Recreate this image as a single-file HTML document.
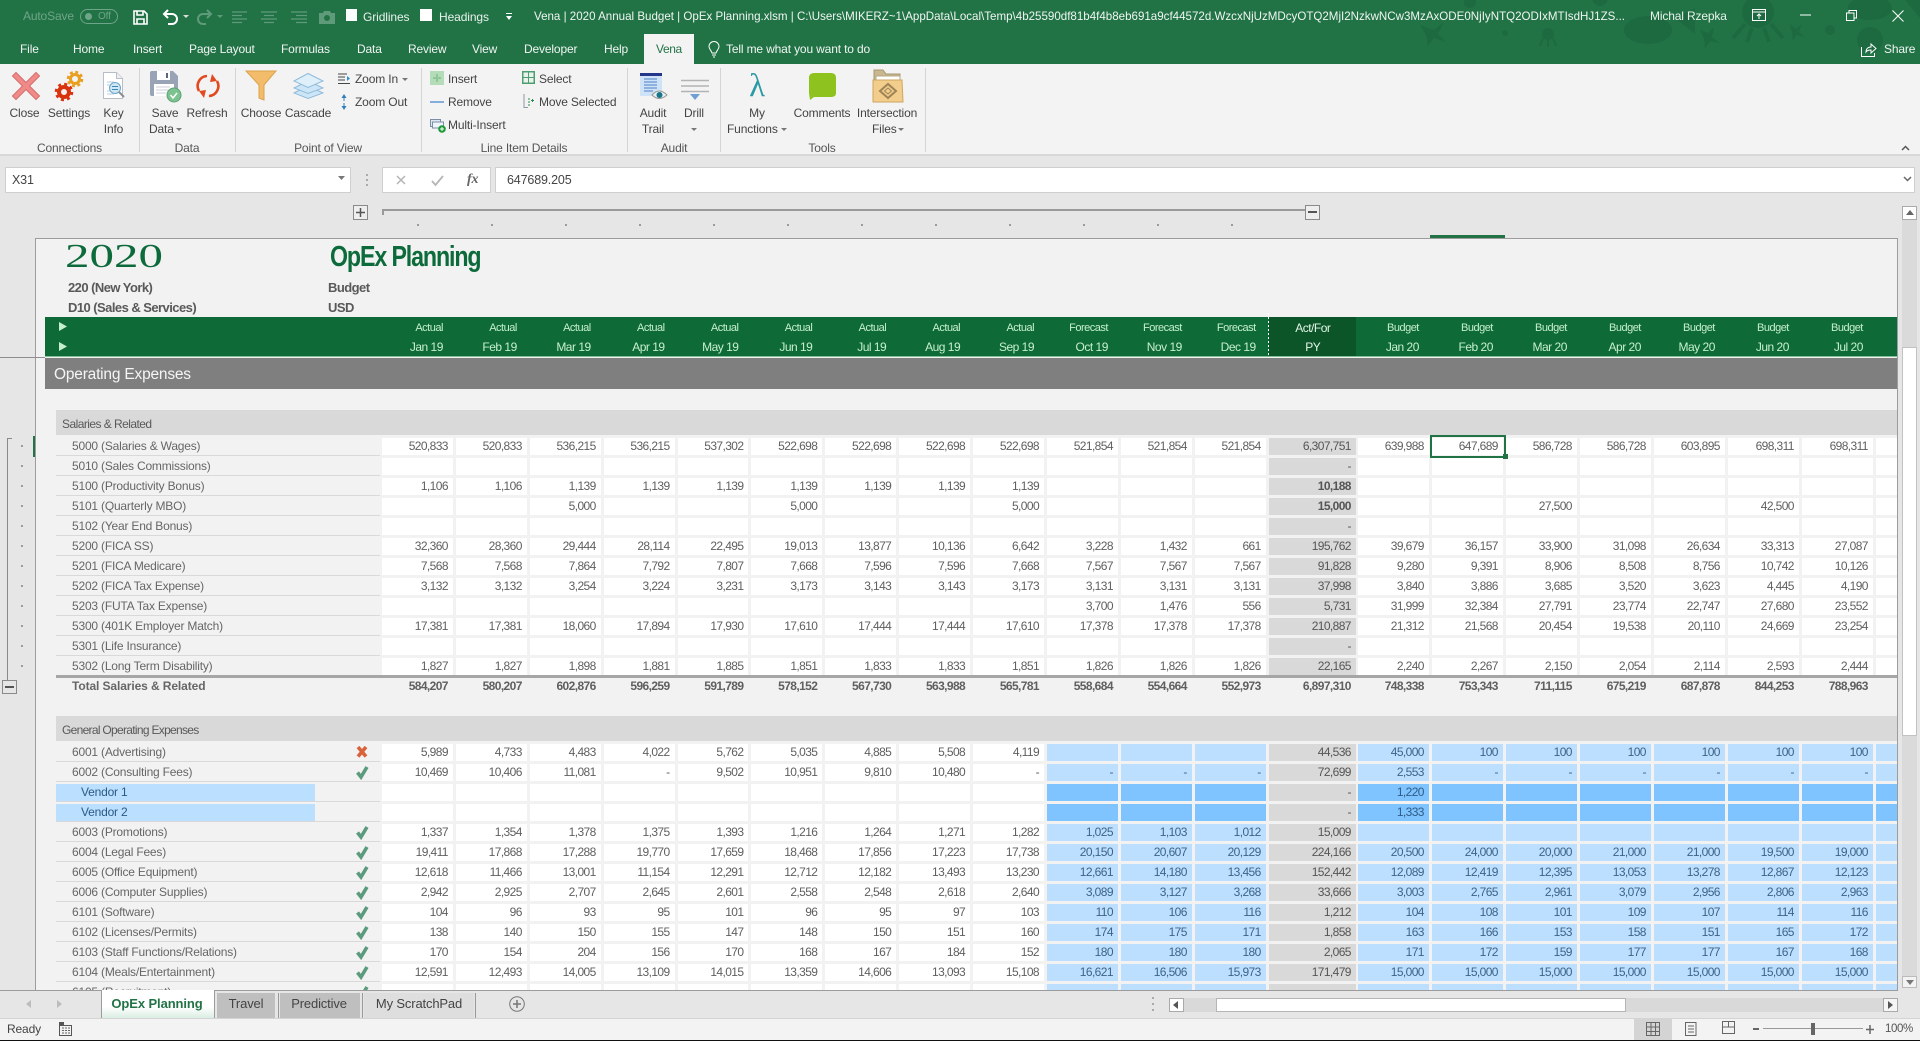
<!DOCTYPE html>
<html><head><meta charset="utf-8"><title>Vena OpEx Planning</title>
<style>
*{box-sizing:border-box}
html,body{margin:0;padding:0;width:1920px;height:1041px;overflow:hidden;background:#e6e6e6;font-family:"Liberation Sans",sans-serif;font-size:12px;color:#444}
.a{position:absolute}
.t{position:absolute;white-space:nowrap;line-height:16px;letter-spacing:-.15px}
.c{transform:translateX(-50%)}
.w{color:#e8f1ec}
.tab{color:#f0f5f2;top:41px}
.rb{color:#444;font-size:12px}
.gl{color:#555;top:140px;font-size:12px}
.sep{position:absolute;width:1px;top:68px;height:84px;background:#d4d4d4}
svg{position:absolute;overflow:visible}
#sheet{position:absolute;left:0;top:0;width:1897px;height:990px;overflow:hidden}
.r{position:absolute;left:0;width:2000px;height:20px;display:grid;grid-template-columns:382px repeat(12,73.9px) 89.2px repeat(8,74px);font-size:12px;letter-spacing:-.6px;color:#5f5f5f}
.r i{font-style:normal;display:block;background:#fff;margin:2px 3px 1px 0;padding-right:5px;text-align:right;line-height:17px;height:17px;white-space:nowrap}
.r i:nth-child(14){background:#d9d9d9;margin-right:2px;color:#555}
.r i.l{position:relative;background:none;margin:0 2px 0 56px;padding:0 0 0 16px;height:20px;line-height:20px;text-align:left;border-bottom:1px solid #d9d9d9;letter-spacing:-.2px;color:#666}
.l svg{left:299.500px;top:3px}
.l b{position:absolute;left:0;top:2px;width:259px;height:17px;line-height:17px;background:#bbdfff;color:#2a5a85;padding-left:25px;font-weight:normal}
.l b+u{position:absolute;left:0;top:19px;width:262px;height:1px;background:#f2f2f2}
.bl i:nth-child(n+15),.bl i:nth-child(n+11):nth-child(-n+13){background:#bddfff;color:#3b6488}
.vd i:nth-child(n+15),.vd i:nth-child(n+11):nth-child(-n+13){background:#7fc4ff;color:#2e5c86}
.tot i,.tot i:nth-child(14){background:none;font-weight:bold;color:#5f5f5f}
.tot i.l{border-bottom:none;font-weight:bold;letter-spacing:-.1px}
.h{position:absolute;left:0;width:2000px;height:20px;display:grid;grid-template-columns:382px repeat(12,73.9px) 89.2px repeat(8,74px);letter-spacing:-.5px;color:#c6efce;line-height:20px}
.h i{font-style:normal;text-align:right;padding-right:13px;white-space:nowrap}
.h i:nth-child(14){text-align:center;padding-right:1px;color:#e2f5e6}
.d{position:absolute;width:2px;height:2px;background:#9a9a9a}
</style></head><body>

<!-- TITLE BAR -->
<div class="a" style="left:0;top:0;width:1920px;height:64px;background:#217346"></div>
<svg style="left:1400px;top:0" width="520" height="64" fill="#1e6a40">
<ellipse cx="248" cy="30" rx="24" ry="14"/><path d="M275 18l20-10v26z"/><path d="M20 25l14 5 10-8-6 12 8 8-12-4-6 8-2-11z"/>
<circle cx="148" cy="34" r="6"/><path d="M143 38l-3 8M148 40v7M153 38l3 8" stroke="#1e6a40" stroke-width="2"/>
<circle cx="358" cy="12" r="16"/><path d="M345 24l-12 14M352 28l-5 14M364 28l5 14M371 24l12 14" stroke="#1e6a40" stroke-width="4"/>
<path d="M300 30l8 3 6-6-2 10 8 6-10-2-5 8-1-10z"/><circle cx="430" cy="30" r="5"/><ellipse cx="470" cy="8" rx="22" ry="12"/><circle cx="470" cy="40" r="13"/><path d="M390 24l6 5 6-5-3 8 6 5-9-2-3 7-1-9z"/>
<path d="M505 0l15 18v-18z"/><circle cx="105" cy="33" r="3"/><circle cx="70" cy="2" r="6"/><circle cx="200" cy="-2" r="8"/>
</svg>
<span class="t" style="left:23px;top:8px;color:#6fa588">AutoSave</span>
<div class="a" style="left:80px;top:9px;width:38px;height:15px;border:1px solid #6fa588;border-radius:8px"></div>
<div class="a" style="left:85px;top:13px;width:7px;height:7px;border-radius:50%;background:#6fa588"></div>
<span class="t" style="left:98px;top:9px;font-size:10px;color:#6fa588">Off</span>
<svg style="left:133px;top:10px" width="15" height="15" fill="none" stroke="#fff" stroke-width="1.6"><path d="M1 1h10l3 3v10H1z"/><path d="M4 1v4h6V1M4 14V9h7v5"/></svg>
<svg style="left:162px;top:9px" width="17" height="16" fill="none" stroke="#fff" stroke-width="2"><path d="M6 1L2 5l4 4M2 5h8a5 5 0 0 1 0 10H6"/></svg>
<svg style="left:183px;top:15px" width="7" height="4" fill="#ddd"><path d="M0 0h6L3 3z"/></svg>
<svg style="left:197px;top:9px" width="16" height="16" fill="none" stroke="#5f9b7b" stroke-width="2"><path d="M10 1l4 4-4 4M14 5H6a5 5 0 0 0 0 10h3"/></svg>
<svg style="left:217px;top:15px" width="7" height="4" fill="#5f9b7b"><path d="M0 0h6L3 3z"/></svg>
<svg style="left:232px;top:11px" width="76" height="12" stroke="#5f9b7b" stroke-width="1.2"><path d="M0 1h15M0 4.500h10M0 8h15M0 11.500h10M29 1h16M32 4.500h10M29 8h16M32 11.500h10M59 1h16M64 4.500h11M59 8h16M64 11.500h11"/></svg>
<svg style="left:319px;top:10px" width="16" height="14" fill="#5f9b7b"><path d="M0 3h4l1-2h6l1 2h4v11H0z"/><circle cx="8" cy="8" r="3" fill="#217346"/></svg>
<div class="a" style="left:346px;top:9px;width:11px;height:12px;background:#fff"></div>
<span class="t w" style="left:363px;top:9px;letter-spacing:-.1px">Gridlines</span>
<div class="a" style="left:420px;top:9px;width:12px;height:12px;background:#fff"></div>
<span class="t w" style="left:439px;top:9px;letter-spacing:-.1px">Headings</span>
<svg style="left:506px;top:13px" width="7" height="8" fill="#fff"><path d="M0 0h6v1H0zM0 3h6L3 7z"/></svg>
<svg style="left:534px;top:4px" width="1092" height="24"><text x="0" y="16" font-family="Liberation Sans" font-size="12" fill="#f0f5f2" textLength="1091" lengthAdjust="spacingAndGlyphs">Vena | 2020 Annual Budget | OpEx Planning.xlsm | C:\Users\MIKERZ~1\AppData\Local\Temp\4b25590df81b4f4b8eb691a9cf44572d.WzcxNjUzMDcyOTQ2MjI2NzkwNCw3MzAxODE0NjIyNTQ2ODIxMTIsdHJ1ZS...</text></svg>
<span class="t w" style="left:1650px;top:8px">Michal Rzepka</span>
<svg style="left:1752px;top:9px" width="14" height="12" fill="none" stroke="#fff"><path d="M.5.5h13v11H.5zM.5 3h13M7 10V5M5 7l2-2 2 2"/></svg>
<svg style="left:1800px;top:14px" width="11" height="2" stroke="#fff"><path d="M0 1h11"/></svg>
<svg style="left:1846px;top:10px" width="11" height="11" fill="none" stroke="#fff"><path d="M.5 3h7.500v7.500H.5zM3 3V.5h7.500V8H8"/></svg>
<svg style="left:1892px;top:10px" width="12" height="12" stroke="#fff"><path d="M.5.5l11 11M11.500.5l-11 11"/></svg>

<!-- TABS -->
<span class="t tab" style="left:20px">File</span>
<span class="t tab" style="left:73px">Home</span>
<span class="t tab" style="left:133px">Insert</span>
<span class="t tab" style="left:189px">Page Layout</span>
<span class="t tab" style="left:281px">Formulas</span>
<span class="t tab" style="left:357px">Data</span>
<span class="t tab" style="left:408px">Review</span>
<span class="t tab" style="left:472px">View</span>
<span class="t tab" style="left:524px">Developer</span>
<span class="t tab" style="left:604px">Help</span>
<div class="a" style="left:644px;top:34px;width:50px;height:30px;background:#f3f3f3"></div>
<span class="t" style="left:656px;top:41px;color:#217346;letter-spacing:-.4px">Vena</span>
<svg style="left:708px;top:41px" width="12" height="17" fill="none" stroke="#fff"><path d="M4 12C3 9 1 8 1 5.500a5 5 0 0 1 10 0C11 8 9 9 8 12zM4 14h4M5 16h2"/></svg>
<span class="t tab" style="left:726px">Tell me what you want to do</span>
<svg style="left:1861px;top:42px" width="16" height="15" fill="none" stroke="#fff"><path d="M.5 5v9.500h13V11M5 10c0-4 3-5 5-5V2l5 4.500-5 4.500V8c-2 0-4 .5-5 2z"/></svg>
<span class="t tab" style="left:1884px">Share</span>

<!-- RIBBON -->
<div class="a" style="left:0;top:64px;width:1920px;height:92px;background:#f3f3f3;border-bottom:2px solid #d8d8d8"></div>
<div class="sep" style="left:139px"></div><div class="sep" style="left:235px"></div><div class="sep" style="left:421px"></div><div class="sep" style="left:627px"></div><div class="sep" style="left:720px"></div><div class="sep" style="left:925px"></div>

<svg style="left:12px;top:72px" width="28" height="28" fill="none" stroke-linecap="square"><path d="M4 4l20 20M24 4L4 24" stroke="#d36c6a" stroke-width="6"/><path d="M4 4l20 20M24 4L4 24" stroke="#f08a88" stroke-width="4"/></svg>
<span class="t c rb" style="left:24.500px;top:105px">Close</span>
<svg style="left:55px;top:71px" width="30" height="30" fill="none"><circle cx="9" cy="21" r="5" stroke="#d8330c" stroke-width="4"/><circle cx="9" cy="21" r="8" stroke="#d8330c" stroke-width="2.500" stroke-dasharray="3 3.280"/><circle cx="20" cy="8" r="4.500" stroke="#e9a021" stroke-width="3"/><circle cx="20" cy="8" r="7" stroke="#e9a021" stroke-width="2.500" stroke-dasharray="3 2.500"/></svg>
<span class="t c rb" style="left:69px;top:105px">Settings</span>
<svg style="left:103px;top:72px" width="24" height="28"><path d="M.5.5h13l6 6v20H.5z" fill="#fff" stroke="#b8bec6"/><path d="M13.500.5v6h6" fill="#eee" stroke="#b8bec6"/><circle cx="12" cy="16" r="5.500" fill="#cfe6f5" stroke="#6aa5c9"/><path d="M9 14.500h6M9 17.500h6" stroke="#3b87b5"/><path d="M16 20l5 5" stroke="#8a8f95" stroke-width="2"/><path d="M4 10h7M4 13h3M4 19h3M4 22h7" stroke="#b5cbdc"/></svg>
<span class="t c rb" style="left:113.500px;top:105px">Key</span><span class="t c rb" style="left:113.500px;top:121px">Info</span>
<span class="t c gl" style="left:69.500px">Connections</span>

<svg style="left:150px;top:71px" width="31" height="31"><path d="M0 2q0-2 2-2h21l5 5v20H2q-2 0-2-2z" fill="#98a4b5"/><path d="M7 0h13v9H7z" fill="#fff"/><path d="M16 2h2v5h-2z" fill="#5b6777"/><path d="M4 13h20v12H4z" fill="#fff"/><path d="M6 16h14M6 19h14M6 22h10" stroke="#ccd"/><circle cx="24" cy="24" r="7" fill="#7cc391" stroke="#5da274"/><path d="M20.500 24l2.500 3 4-5" stroke="#fff" stroke-width="1.500" fill="none"/></svg>
<span class="t c rb" style="left:165px;top:105px">Save</span><span class="t rb" style="left:149px;top:121px">Data</span>
<svg style="left:176px;top:128px" width="7" height="4" fill="#777"><path d="M0 0h6L3 3z"/></svg>
<svg style="left:195px;top:73px" width="26" height="26" fill="none" stroke="#e2491f" stroke-width="2.600"><path d="M4 18A10 10 0 0 1 12 3"/><path d="M22 8A10 10 0 0 1 14 23"/><path d="M17 1l5 7-7 1z" fill="#e2491f" stroke="none"/><path d="M9 25l-5-7 7-1z" fill="#e2491f" stroke="none"/></svg>
<span class="t c rb" style="left:207px;top:105px">Refresh</span>
<span class="t c gl" style="left:187px">Data</span>

<svg style="left:246px;top:71px" width="31" height="30"><path d="M0 0h30L18 14v15l-5 -2V14z" fill="#f2bc6a" stroke="#dca24b"/></svg>
<span class="t c rb" style="left:261px;top:105px">Choose</span>
<svg style="left:293px;top:73px" width="31" height="26" fill="#cde6f7" stroke="#8fbbdb"><path d="M15 13L1 20l14 5.500L30 20z"/><path d="M15 8L1 15l14 5.500L30 15z"/><path d="M15 .5L1 8l14 6.500L30 8z" fill="#dff0fa"/></svg>
<span class="t c rb" style="left:308px;top:105px">Cascade</span>
<svg style="left:338px;top:73px" width="13" height="12" stroke="#444"><path d="M0 1h9M0 4h7M0 7h7M0 10.500h12"/><path d="M9 3l3 2.500-3 2.500z" fill="#2e90d0" stroke="none"/></svg>
<span class="t rb" style="left:355px;top:71px">Zoom In</span>
<svg style="left:402px;top:78px" width="7" height="4" fill="#777"><path d="M0 0h6L3 3z"/></svg>
<svg style="left:340px;top:94px" width="8" height="16" fill="#2e7fc0"><path d="M4 0l2.500 4h-5zM4 16l-2.500-4h5zM3.500 4h1v3h-1zM3.500 9h1v3h-1z"/></svg>
<span class="t rb" style="left:355px;top:94px">Zoom Out</span>
<span class="t c gl" style="left:328px">Point of View</span>

<div class="a" style="left:430px;top:71px;width:14px;height:14px;background:#b5dcb9"></div>
<svg style="left:433px;top:74px" width="8" height="8" stroke="#8fc798" stroke-width="2"><path d="M4 0v8M0 4h8"/></svg>
<span class="t rb" style="left:448px;top:71px">Insert</span>
<div class="a" style="left:430px;top:101px;width:14px;height:2px;background:#86aeda"></div>
<span class="t rb" style="left:448px;top:94px">Remove</span>
<svg style="left:430px;top:118px" width="16" height="15"><path d="M.5 1.500h10v7h-10z" fill="#dce8f3" stroke="#7c8ea3"/><path d="M2.500 4h11v6h-11z" fill="#eef4f9" stroke="#7c8ea3"/><circle cx="12" cy="11" r="3.800" fill="#1f9a3a"/><path d="M12 9v4M10 11h4" stroke="#fff"/></svg>
<span class="t rb" style="left:448px;top:117px">Multi-Insert</span>
<svg style="left:522px;top:71px" width="13" height="13"><path d="M0 0h13v13H0z" fill="#4d9e70"/><path d="M1.500 1.500h4.500v4.500h-4.500zM7 1.500h4.500v4.500H7zM1.500 7h4.500v4.500h-4.500zM7 7h4.500v4.500H7z" fill="#e9f3ec"/></svg>
<span class="t rb" style="left:539px;top:71px">Select</span>
<svg style="left:523px;top:94px" width="12" height="15" fill="none" stroke="#8c9aa8"><path d="M1 0v13.500h4"/><path d="M5 5h2M5 8h2M5 11h2" stroke="#2a8d4d"/><path d="M8 6.500h3M9.500 5v3" stroke="#2a8d4d"/></svg>
<span class="t rb" style="left:539px;top:94px">Move Selected</span>
<span class="t c gl" style="left:524px">Line Item Details</span>

<svg style="left:640px;top:73px" width="28" height="28"><path d="M0 0h22v3H0z" fill="#24368a"/><path d="M0 3h22v20H0z" fill="#cfe3f8"/><path d="M4 6h13M4 9h13M4 12h13M4 15h13M4 18h9" stroke="#4d7fc9"/><path d="M12 22q7-8 15 0-8 7-15 0z" fill="#e8f0f2" stroke="#999"/><circle cx="19.500" cy="22" r="3" fill="#17768a"/></svg>
<span class="t c rb" style="left:653px;top:105px">Audit</span><span class="t c rb" style="left:653px;top:121px">Trail</span>
<svg style="left:681px;top:80px" width="28" height="21"><path d="M0 .5h28M0 6h28M0 11.500h28" stroke="#b3b3b3" stroke-width="1.500"/><path d="M9 14h10l-5 6z" fill="#6f9fd0"/></svg>
<span class="t c rb" style="left:694px;top:105px">Drill</span>
<svg style="left:691px;top:128px" width="7" height="4" fill="#777"><path d="M0 0h6L3 3z"/></svg>
<span class="t c gl" style="left:674px">Audit</span>

<span class="t c" style="left:757px;top:70px;font-family:'Liberation Serif',serif;font-size:33px;line-height:32px;color:#2c9aa5">λ</span>
<span class="t c rb" style="left:757px;top:105px">My</span><span class="t rb" style="left:727px;top:121px">Functions</span>
<svg style="left:781px;top:128px" width="7" height="4" fill="#777"><path d="M0 0h6L3 3z"/></svg>
<svg style="left:809px;top:73px" width="27" height="27"><path d="M5 0h17q5 0 5 5v15q0 4-5 4H5l-4 3L0 20V5q0-5 5-5z" fill="#8dc21f"/></svg>
<span class="t c rb" style="left:822px;top:105px">Comments</span>
<svg style="left:873px;top:70px" width="30" height="32"><path d="M1 0h9l3 4h14v12H1z" fill="#c8b78f" stroke="#a79670"/><path d="M3 6h24v9H3z" fill="#fff" stroke="#b7a884"/><path d="M0 10h29l1 22H0z" fill="#f2cd8b" stroke="#cfa65f"/><path d="M15 14l8 7-8 7-8-7z" fill="none" stroke="#9e8456" stroke-width="2"/><path d="M15 18l3.500 3-3.500 3-3.500-3z" fill="none" stroke="#9e8456"/></svg>
<span class="t c rb" style="left:887px;top:105px">Intersection</span><span class="t rb" style="left:872px;top:121px">Files</span>
<svg style="left:898px;top:128px" width="7" height="4" fill="#777"><path d="M0 0h6L3 3z"/></svg>
<span class="t c gl" style="left:822px">Tools</span>
<svg style="left:1901px;top:145px" width="9" height="6" fill="none" stroke="#555" stroke-width="1.500"><path d="M1 5l3.500-3.500L8 5"/></svg>

<!-- FORMULA BAR -->
<div class="a" style="left:5px;top:167px;width:346px;height:26px;background:#fff;border:1px solid #cfcfcf"></div>
<span class="t" style="left:12px;top:172px;font-size:12.500px;color:#444">X31</span>
<svg style="left:338px;top:176px" width="7" height="4" fill="#777"><path d="M0 0h7L3.500 4z"/></svg>
<svg style="left:366px;top:174px" width="2" height="13" fill="#aaa"><path d="M0 0h2v2H0zM0 5h2v2H0zM0 10h2v2H0z"/></svg>
<div class="a" style="left:382px;top:167px;width:109px;height:26px;background:#fff;border:1px solid #cfcfcf"></div>
<svg style="left:396px;top:175px" width="10" height="10" stroke="#b5b5b5" stroke-width="1.500"><path d="M1 1l8 8M9 1l-8 8"/></svg>
<svg style="left:431px;top:175px" width="13" height="11" fill="none" stroke="#b5b5b5" stroke-width="1.800"><path d="M1 6l3.500 4L12 1"/></svg>
<span class="t" style="left:467px;top:172px;font:italic bold 14px 'Liberation Serif',serif;color:#666">fx</span>
<div class="a" style="left:495px;top:167px;width:1420px;height:26px;background:#fff;border:1px solid #cfcfcf"></div>
<span class="t" style="left:507px;top:172px;font-size:12.500px;color:#444">647689.205</span>
<svg style="left:1903px;top:176px" width="9" height="6" fill="none" stroke="#666" stroke-width="1.500"><path d="M1 1l3.500 3.500L8 1"/></svg>

<!-- OUTLINE -->
<div class="a" style="left:353px;top:205px;width:15px;height:15px;border:1px solid #8a8a8a;background:#eee"></div>
<svg style="left:356px;top:208px" width="9" height="9" stroke="#555" stroke-width="1.500"><path d="M4.500 0v9M0 4.500h9"/></svg>
<div class="a" style="left:382px;top:209px;width:924px;height:2px;background:#9a9a9a"></div>
<div class="a" style="left:382px;top:209px;width:2px;height:6px;background:#9a9a9a"></div>
<div class="a" style="left:1305px;top:205px;width:15px;height:15px;border:1px solid #8a8a8a;background:#eee"></div>
<div class="a" style="left:1308px;top:211px;width:9px;height:2px;background:#555"></div>
<div class="d" style="left:417px;top:224px"></div><div class="d" style="left:491px;top:224px"></div><div class="d" style="left:565px;top:224px"></div><div class="d" style="left:639px;top:224px"></div><div class="d" style="left:713px;top:224px"></div><div class="d" style="left:787px;top:224px"></div><div class="d" style="left:861px;top:224px"></div><div class="d" style="left:935px;top:224px"></div><div class="d" style="left:1009px;top:224px"></div><div class="d" style="left:1083px;top:224px"></div><div class="d" style="left:1157px;top:224px"></div><div class="d" style="left:1231px;top:224px"></div>

<!-- SCROLL V -->
<div class="a" style="left:1902px;top:220px;width:15px;height:756px;background:#dadada"></div>
<div class="a" style="left:1902px;top:347px;width:15px;height:389px;background:#fff;border:1px solid #c2c2c2"></div>
<div class="a" style="left:1902px;top:206px;width:15px;height:14px;background:#fff;border:1px solid #aaa"></div>
<svg style="left:1906px;top:210px" width="8" height="5" fill="#666"><path d="M4 0l4 5H0z"/></svg>
<div class="a" style="left:1902px;top:976px;width:15px;height:12px;background:#f3f3f3;border:1px solid #bbb"></div>
<svg style="left:1906px;top:980px" width="8" height="5" fill="#777"><path d="M4 5L8 0H0z"/></svg>

<!-- SHEET BG -->
<div class="a" style="left:35px;top:238px;width:1863px;height:753px;background:#f2f2f2;border:1px solid #9c9c9c;border-bottom:none"></div>
<div class="a" style="left:1430px;top:235px;width:75px;height:3px;background:#217346"></div>

<!-- LEFT GUTTER -->
<div class="a" style="left:0;top:357px;width:45px;height:1px;background:#8e8e8e"></div>
<div class="a" style="left:7px;top:438px;width:1px;height:242px;background:#8a8a8a"></div>
<div class="a" style="left:7px;top:438px;width:5px;height:1px;background:#8a8a8a"></div>
<div class="a" style="left:2px;top:680px;width:15px;height:14px;border:1px solid #8a8a8a"></div>
<div class="a" style="left:5px;top:686px;width:9px;height:2px;background:#555"></div>
<div class="d" style="left:21px;top:445px"></div><div class="d" style="left:21px;top:465px"></div><div class="d" style="left:21px;top:485px"></div><div class="d" style="left:21px;top:505px"></div><div class="d" style="left:21px;top:525px"></div><div class="d" style="left:21px;top:545px"></div><div class="d" style="left:21px;top:565px"></div><div class="d" style="left:21px;top:585px"></div><div class="d" style="left:21px;top:605px"></div><div class="d" style="left:21px;top:625px"></div><div class="d" style="left:21px;top:645px"></div><div class="d" style="left:21px;top:665px"></div>
<div class="a" style="left:33px;top:436px;width:2px;height:21px;background:#217346"></div>

<!-- ICON DEFS -->
<svg width="0" height="0" style="left:0;top:0"><defs>
<g id="k"><path d="M1.500 7.500l3.500 4.500L11 2" fill="none" stroke="#5b9a7d" stroke-width="3.600"/></g>
<g id="x"><path d="M2 2l8 9.500M10 2l-8 9.500" fill="none" stroke="#d9623b" stroke-width="3.600"/></g>
</defs></svg>

<div id="sheet">
<!-- HEADINGS -->
<div class="t" style="left:65px;top:240px;font:34px/34px 'Liberation Serif',serif;color:#0d6b3b;transform:scaleX(1.44);transform-origin:0 0;letter-spacing:0">2020</div>
<div class="t" style="left:330px;top:241px;font:bold 29px/32px 'Liberation Sans',sans-serif;color:#0d6b3b;letter-spacing:-1.400px;transform:scaleX(.8);transform-origin:0 0">OpEx Planning</div>
<span class="t" style="left:68px;top:280px;font-weight:bold;font-size:13px;color:#595959;letter-spacing:-.55px">220 (New York)</span>
<span class="t" style="left:68px;top:300px;font-weight:bold;font-size:13px;color:#595959;letter-spacing:-.55px">D10 (Sales &amp; Services)</span>
<span class="t" style="left:328px;top:280px;font-weight:bold;font-size:13px;color:#595959;letter-spacing:-.55px">Budget</span>
<span class="t" style="left:328px;top:300px;font-weight:bold;font-size:13px;color:#595959;letter-spacing:-.55px">USD</span>

<!-- GREEN HEADER -->
<div class="a" style="left:45px;top:317px;width:1852px;height:40px;background:#0e6b38;border-bottom:1px solid #7fbf96"></div>
<div class="a" style="left:1269px;top:317px;width:87px;height:39px;background:#0b5529"></div>
<div class="a" style="left:1268px;top:313px;width:1px;height:44px;background:repeating-linear-gradient(#fff 0 2px,transparent 2px 4px)"></div>
<svg style="left:59px;top:322px" width="8" height="30" fill="#c6efce"><path d="M0 0l8 4.500L0 9zM0 20l8 4.500L0 29z"/></svg>
<div class="h" style="top:318px;font-size:11px"><i></i><i>Actual</i><i>Actual</i><i>Actual</i><i>Actual</i><i>Actual</i><i>Actual</i><i>Actual</i><i>Actual</i><i>Actual</i><i>Forecast</i><i>Forecast</i><i>Forecast</i><i style="font-size:12px">Act/For</i><i>Budget</i><i>Budget</i><i>Budget</i><i>Budget</i><i>Budget</i><i>Budget</i><i>Budget</i><i></i></div>
<div class="h" style="top:337px;font-size:12px"><i></i><i>Jan 19</i><i>Feb 19</i><i>Mar 19</i><i>Apr 19</i><i>May 19</i><i>Jun 19</i><i>Jul 19</i><i>Aug 19</i><i>Sep 19</i><i>Oct 19</i><i>Nov 19</i><i>Dec 19</i><i>PY</i><i>Jan 20</i><i>Feb 20</i><i>Mar 20</i><i>Apr 20</i><i>May 20</i><i>Jun 20</i><i>Jul 20</i><i></i></div>

<div class="a" style="left:45px;top:358px;width:1852px;height:31px;background:#7f7f7f"></div>
<span class="t" style="left:54px;top:365px;font-size:15.500px;line-height:20px;color:#f5f5f5;letter-spacing:-.2px">Operating Expenses</span>

<div class="a" style="left:56px;top:410px;width:1841px;height:25px;background:#d9d9d9"></div>
<span class="t" style="left:62px;top:416px;color:#595959;letter-spacing:-.55px">Salaries &amp; Related</span>

<div class="r" style="top:436px"><i class="l">5000 (Salaries &amp; Wages)</i><i>520,833</i><i>520,833</i><i>536,215</i><i>536,215</i><i>537,302</i><i>522,698</i><i>522,698</i><i>522,698</i><i>522,698</i><i>521,854</i><i>521,854</i><i>521,854</i><i>6,307,751</i><i>639,988</i><i>647,689</i><i>586,728</i><i>586,728</i><i>603,895</i><i>698,311</i><i>698,311</i><i></i></div>
<div class="r" style="top:456px"><i class="l">5010 (Sales Commissions)</i><i></i><i></i><i></i><i></i><i></i><i></i><i></i><i></i><i></i><i></i><i></i><i></i><i>-</i><i></i><i></i><i></i><i></i><i></i><i></i><i></i><i></i></div>
<div class="r" style="top:476px"><i class="l">5100 (Productivity Bonus)</i><i>1,106</i><i>1,106</i><i>1,139</i><i>1,139</i><i>1,139</i><i>1,139</i><i>1,139</i><i>1,139</i><i>1,139</i><i></i><i></i><i></i><i><b>10,188</b></i><i></i><i></i><i></i><i></i><i></i><i></i><i></i><i></i></div>
<div class="r" style="top:496px"><i class="l">5101 (Quarterly MBO)</i><i></i><i></i><i>5,000</i><i></i><i></i><i>5,000</i><i></i><i></i><i>5,000</i><i></i><i></i><i></i><i><b>15,000</b></i><i></i><i></i><i>27,500</i><i></i><i></i><i>42,500</i><i></i><i></i></div>
<div class="r" style="top:516px"><i class="l">5102 (Year End Bonus)</i><i></i><i></i><i></i><i></i><i></i><i></i><i></i><i></i><i></i><i></i><i></i><i></i><i>-</i><i></i><i></i><i></i><i></i><i></i><i></i><i></i><i></i></div>
<div class="r" style="top:536px"><i class="l">5200 (FICA SS)</i><i>32,360</i><i>28,360</i><i>29,444</i><i>28,114</i><i>22,495</i><i>19,013</i><i>13,877</i><i>10,136</i><i>6,642</i><i>3,228</i><i>1,432</i><i>661</i><i>195,762</i><i>39,679</i><i>36,157</i><i>33,900</i><i>31,098</i><i>26,634</i><i>33,313</i><i>27,087</i><i></i></div>
<div class="r" style="top:556px"><i class="l">5201 (FICA Medicare)</i><i>7,568</i><i>7,568</i><i>7,864</i><i>7,792</i><i>7,807</i><i>7,668</i><i>7,596</i><i>7,596</i><i>7,668</i><i>7,567</i><i>7,567</i><i>7,567</i><i>91,828</i><i>9,280</i><i>9,391</i><i>8,906</i><i>8,508</i><i>8,756</i><i>10,742</i><i>10,126</i><i></i></div>
<div class="r" style="top:576px"><i class="l">5202 (FICA Tax Expense)</i><i>3,132</i><i>3,132</i><i>3,254</i><i>3,224</i><i>3,231</i><i>3,173</i><i>3,143</i><i>3,143</i><i>3,173</i><i>3,131</i><i>3,131</i><i>3,131</i><i>37,998</i><i>3,840</i><i>3,886</i><i>3,685</i><i>3,520</i><i>3,623</i><i>4,445</i><i>4,190</i><i></i></div>
<div class="r" style="top:596px"><i class="l">5203 (FUTA Tax Expense)</i><i></i><i></i><i></i><i></i><i></i><i></i><i></i><i></i><i></i><i>3,700</i><i>1,476</i><i>556</i><i>5,731</i><i>31,999</i><i>32,384</i><i>27,791</i><i>23,774</i><i>22,747</i><i>27,680</i><i>23,552</i><i></i></div>
<div class="r" style="top:616px"><i class="l">5300 (401K Employer Match)</i><i>17,381</i><i>17,381</i><i>18,060</i><i>17,894</i><i>17,930</i><i>17,610</i><i>17,444</i><i>17,444</i><i>17,610</i><i>17,378</i><i>17,378</i><i>17,378</i><i>210,887</i><i>21,312</i><i>21,568</i><i>20,454</i><i>19,538</i><i>20,110</i><i>24,669</i><i>23,254</i><i></i></div>
<div class="r" style="top:636px"><i class="l">5301 (Life Insurance)</i><i></i><i></i><i></i><i></i><i></i><i></i><i></i><i></i><i></i><i></i><i></i><i></i><i>-</i><i></i><i></i><i></i><i></i><i></i><i></i><i></i><i></i></div>
<div class="r" style="top:656px"><i class="l">5302 (Long Term Disability)</i><i>1,827</i><i>1,827</i><i>1,898</i><i>1,881</i><i>1,885</i><i>1,851</i><i>1,833</i><i>1,833</i><i>1,851</i><i>1,826</i><i>1,826</i><i>1,826</i><i>22,165</i><i>2,240</i><i>2,267</i><i>2,150</i><i>2,054</i><i>2,114</i><i>2,593</i><i>2,444</i><i></i></div>
<div class="a" style="left:56px;top:675px;width:1841px;height:3px;background:#a6a6a6"></div>
<div class="r tot" style="top:676px"><i class="l">Total Salaries &amp; Related</i><i>584,207</i><i>580,207</i><i>602,876</i><i>596,259</i><i>591,789</i><i>578,152</i><i>567,730</i><i>563,988</i><i>565,781</i><i>558,684</i><i>554,664</i><i>552,973</i><i>6,897,310</i><i>748,338</i><i>753,343</i><i>711,115</i><i>675,219</i><i>687,878</i><i>844,253</i><i>788,963</i><i></i></div>

<div class="a" style="left:56px;top:716px;width:1841px;height:25px;background:#d9d9d9"></div>
<span class="t" style="left:62px;top:722px;color:#595959;letter-spacing:-.7px">General Operating Expenses</span>

<div class="r bl" style="top:742px"><i class="l">6001 (Advertising)<svg width="12" height="14"><use href="#x"/></svg></i><i>5,989</i><i>4,733</i><i>4,483</i><i>4,022</i><i>5,762</i><i>5,035</i><i>4,885</i><i>5,508</i><i>4,119</i><i></i><i></i><i></i><i>44,536</i><i>45,000</i><i>100</i><i>100</i><i>100</i><i>100</i><i>100</i><i>100</i><i></i></div>
<div class="r bl" style="top:762px"><i class="l">6002 (Consulting Fees)<svg width="12" height="14"><use href="#k"/></svg></i><i>10,469</i><i>10,406</i><i>11,081</i><i>-</i><i>9,502</i><i>10,951</i><i>9,810</i><i>10,480</i><i>-</i><i>-</i><i>-</i><i>-</i><i>72,699</i><i>2,553</i><i>-</i><i>-</i><i>-</i><i>-</i><i>-</i><i>-</i><i></i></div>
<div class="r vd" style="top:782px"><i class="l"><b>Vendor 1</b></i><i></i><i></i><i></i><i></i><i></i><i></i><i></i><i></i><i></i><i></i><i></i><i></i><i>-</i><i>1,220</i><i></i><i></i><i></i><i></i><i></i><i></i><i></i></div>
<div class="r vd" style="top:802px"><i class="l"><b>Vendor 2</b></i><i></i><i></i><i></i><i></i><i></i><i></i><i></i><i></i><i></i><i></i><i></i><i></i><i>-</i><i>1,333</i><i></i><i></i><i></i><i></i><i></i><i></i><i></i></div>
<div class="r bl" style="top:822px"><i class="l">6003 (Promotions)<svg width="12" height="14"><use href="#k"/></svg></i><i>1,337</i><i>1,354</i><i>1,378</i><i>1,375</i><i>1,393</i><i>1,216</i><i>1,264</i><i>1,271</i><i>1,282</i><i>1,025</i><i>1,103</i><i>1,012</i><i>15,009</i><i></i><i></i><i></i><i></i><i></i><i></i><i></i><i></i></div>
<div class="r bl" style="top:842px"><i class="l">6004 (Legal Fees)<svg width="12" height="14"><use href="#k"/></svg></i><i>19,411</i><i>17,868</i><i>17,288</i><i>19,770</i><i>17,659</i><i>18,468</i><i>17,856</i><i>17,223</i><i>17,738</i><i>20,150</i><i>20,607</i><i>20,129</i><i>224,166</i><i>20,500</i><i>24,000</i><i>20,000</i><i>21,000</i><i>21,000</i><i>19,500</i><i>19,000</i><i></i></div>
<div class="r bl" style="top:862px"><i class="l">6005 (Office Equipment)<svg width="12" height="14"><use href="#k"/></svg></i><i>12,618</i><i>11,466</i><i>13,001</i><i>11,154</i><i>12,291</i><i>12,712</i><i>12,182</i><i>13,493</i><i>13,230</i><i>12,661</i><i>14,180</i><i>13,456</i><i>152,442</i><i>12,089</i><i>12,419</i><i>12,395</i><i>13,053</i><i>13,278</i><i>12,867</i><i>12,123</i><i></i></div>
<div class="r bl" style="top:882px"><i class="l">6006 (Computer Supplies)<svg width="12" height="14"><use href="#k"/></svg></i><i>2,942</i><i>2,925</i><i>2,707</i><i>2,645</i><i>2,601</i><i>2,558</i><i>2,548</i><i>2,618</i><i>2,640</i><i>3,089</i><i>3,127</i><i>3,268</i><i>33,666</i><i>3,003</i><i>2,765</i><i>2,961</i><i>3,079</i><i>2,956</i><i>2,806</i><i>2,963</i><i></i></div>
<div class="r bl" style="top:902px"><i class="l">6101 (Software)<svg width="12" height="14"><use href="#k"/></svg></i><i>104</i><i>96</i><i>93</i><i>95</i><i>101</i><i>96</i><i>95</i><i>97</i><i>103</i><i>110</i><i>106</i><i>116</i><i>1,212</i><i>104</i><i>108</i><i>101</i><i>109</i><i>107</i><i>114</i><i>116</i><i></i></div>
<div class="r bl" style="top:922px"><i class="l">6102 (Licenses/Permits)<svg width="12" height="14"><use href="#k"/></svg></i><i>138</i><i>140</i><i>150</i><i>155</i><i>147</i><i>148</i><i>150</i><i>151</i><i>160</i><i>174</i><i>175</i><i>171</i><i>1,858</i><i>163</i><i>166</i><i>153</i><i>158</i><i>151</i><i>165</i><i>172</i><i></i></div>
<div class="r bl" style="top:942px"><i class="l">6103 (Staff Functions/Relations)<svg width="12" height="14"><use href="#k"/></svg></i><i>170</i><i>154</i><i>204</i><i>156</i><i>170</i><i>168</i><i>167</i><i>184</i><i>152</i><i>180</i><i>180</i><i>180</i><i>2,065</i><i>171</i><i>172</i><i>159</i><i>177</i><i>177</i><i>167</i><i>168</i><i></i></div>
<div class="r bl" style="top:962px"><i class="l">6104 (Meals/Entertainment)<svg width="12" height="14"><use href="#k"/></svg></i><i>12,591</i><i>12,493</i><i>14,005</i><i>13,109</i><i>14,015</i><i>13,359</i><i>14,606</i><i>13,093</i><i>15,108</i><i>16,621</i><i>16,506</i><i>15,973</i><i>171,479</i><i>15,000</i><i>15,000</i><i>15,000</i><i>15,000</i><i>15,000</i><i>15,000</i><i>15,000</i><i></i></div>
<div class="r bl" style="top:982px"><i class="l">6105 (Recruitment)<svg width="12" height="14"><use href="#k"/></svg></i><i></i><i></i><i></i><i></i><i></i><i></i><i></i><i></i><i></i><i></i><i></i><i></i><i></i><i></i><i></i><i></i><i></i><i></i><i></i><i></i><i></i></div>

<!-- selection -->
<div class="a" style="left:1430px;top:435px;width:76px;height:23px;border:2px solid #217346"></div>
<div class="a" style="left:1503px;top:454px;width:5px;height:5px;background:#217346"></div>
</div>
<div class="a" style="left:35px;top:990px;width:1863px;height:1px;background:#9c9c9c"></div>

<!-- TAB BAR -->
<div class="a" style="left:0;top:991px;width:1920px;height:27px;background:#e6e6e6"></div>
<div class="a" style="left:0;top:990px;width:1898px;height:1px;background:#9c9c9c"></div>
<svg style="left:26px;top:1000px" width="36" height="9" fill="#bdbdbd"><path d="M5 0v8L0 4zM31 0v8l5-4z"/></svg>
<div class="a" style="left:101px;top:990px;width:114px;height:33px;background:linear-gradient(#fff 55%,#cfe9da);border:1px solid #9c9c9c;border-top:none;border-bottom:2px solid #217346"></div>
<span class="t c" style="left:157px;top:996px;font-weight:bold;font-size:13px;color:#217346;letter-spacing:-.1px">OpEx Planning</span>
<div class="a" style="left:217px;top:993px;width:58px;height:29px;background:#bfbfbf"></div>
<span class="t c" style="left:246px;top:996px;font-size:13px;color:#444">Travel</span>
<div class="a" style="left:278px;top:993px;width:1px;height:29px;background:#999"></div>
<div class="a" style="left:280px;top:993px;width:80px;height:29px;background:#bfbfbf"></div>
<span class="t c" style="left:319px;top:996px;font-size:13px;color:#444">Predictive</span>
<div class="a" style="left:362px;top:993px;width:1px;height:29px;background:#999"></div>
<div class="a" style="left:364px;top:993px;width:110px;height:29px;background:#dedede"></div>
<span class="t c" style="left:419px;top:996px;font-size:13px;color:#444">My ScratchPad</span>
<div class="a" style="left:475px;top:993px;width:1px;height:29px;background:#999"></div>
<svg style="left:509px;top:996px" width="16" height="16" fill="none" stroke="#777"><circle cx="8" cy="8" r="7.300"/><path d="M8 4v8M4 8h8" stroke-width="1.500"/></svg>
<svg style="left:1152px;top:997px" width="2" height="16" fill="#aaa"><path d="M0 0h2v2H0zM0 6h2v2H0zM0 12h2v2H0z"/></svg>
<div class="a" style="left:1184px;top:998px;width:699px;height:14px;background:#d9d9d9"></div>
<div class="a" style="left:1169px;top:998px;width:15px;height:14px;background:#fff;border:1px solid #aaa"></div>
<svg style="left:1173px;top:1001px" width="5" height="8" fill="#555"><path d="M5 0v8L0 4z"/></svg>
<div class="a" style="left:1216px;top:998px;width:410px;height:14px;background:#fff;border:1px solid #b5b5b5"></div>
<div class="a" style="left:1883px;top:998px;width:15px;height:14px;background:#f5f5f5;border:1px solid #aaa"></div>
<svg style="left:1888px;top:1001px" width="5" height="8" fill="#555"><path d="M0 0v8l5-4z"/></svg>

<!-- STATUS BAR -->
<div class="a" style="left:0;top:1018px;width:1920px;height:22px;background:#f3f3f3;border-top:1px solid #d4d4d4"></div>
<div class="a" style="left:0;top:1040px;width:1920px;height:1px;background:#111"></div>
<span class="t" style="left:7px;top:1021px;font-size:12px;color:#444">Ready</span>
<svg style="left:59px;top:1022px" width="13" height="14" fill="none" stroke="#555"><path d="M.5 3.500h12v10H.5z"/><path d="M3 6h2M6 6h2M9 6h2M3 8.500h2M6 8.500h2M9 8.500h2M3 11h2M6 11h2M9 11h2" stroke="#666"/><path d="M0 0h5v3H0z" fill="#555" stroke="none"/></svg>
<div class="a" style="left:1634px;top:1019px;width:38px;height:21px;background:#d4d4d4"></div>
<svg style="left:1646px;top:1022px" width="14" height="14" fill="none" stroke="#666"><path d="M.5.5h13v13H.5zM.5 5h13M.5 9.500h13M5 .5v13M9.500.5v13"/></svg>
<svg style="left:1685px;top:1022px" width="12" height="14" fill="none" stroke="#666"><path d="M.5.5h10.500v13H.5zM3 4h6M3 7h6M3 10h6"/></svg>
<svg style="left:1722px;top:1021px" width="14" height="14" fill="none" stroke="#666"><path d="M.5.5h12v12H.5zM.5 6h12M6.500.5v5.500"/></svg>
<div class="a" style="left:1753px;top:1028px;width:6px;height:2px;background:#666"></div>
<div class="a" style="left:1763px;top:1028px;width:100px;height:1px;background:#999"></div>
<div class="a" style="left:1811px;top:1023px;width:4px;height:12px;background:#666"></div>
<svg style="left:1866px;top:1024px" width="8" height="10" stroke="#666" stroke-width="1.500"><path d="M4 1v9M0 5.500h8"/></svg>
<span class="t" style="left:1885px;top:1021px;font-size:11.500px;letter-spacing:-.4px;color:#555">100%</span>
</body></html>
